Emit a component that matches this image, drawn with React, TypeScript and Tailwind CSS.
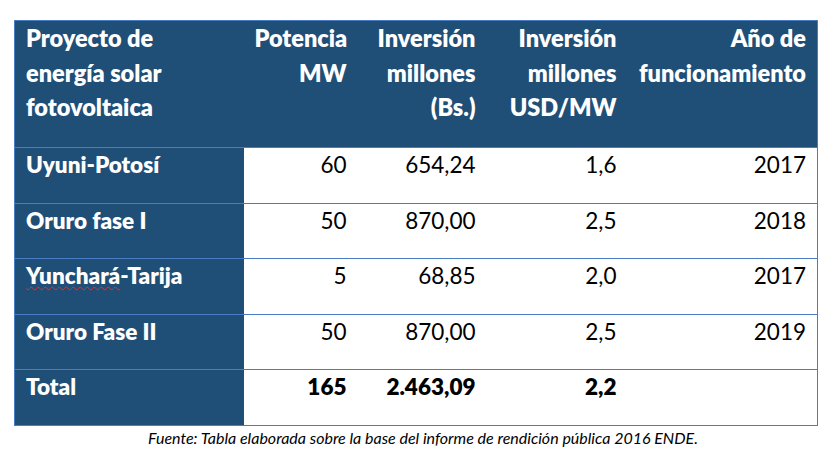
const rows = [
  { name: 'Uyuni-Potosí', mw: '60', inv: '654,24', usd: '1,6', year: '2017' },
  { name: 'Oruro fase I', mw: '50', inv: '870,00', usd: '2,5', year: '2018' },
  { name: 'Yunchará-Tarija', mw: '5', inv: '68,85', usd: '2,0', year: '2017', typo: true },
  { name: 'Oruro Fase II', mw: '50', inv: '870,00', usd: '2,5', year: '2019' },
]

export default function App() {
  return (
    <div className="w-[838px] h-[452px] bg-white font-['Lato',sans-serif] text-[22.5px] leading-[34.5px]">
      <div className="pt-[20px] pl-[14px]">
        <table className="border-collapse border border-[#4a7cc4] table-fixed w-[803px]">
          <colgroup>
            <col className="w-[229px]" />
            <col className="w-[114px]" />
            <col className="w-[129px]" />
            <col className="w-[141px]" />
            <col className="w-[190px]" />
          </colgroup>
          <thead>
            <tr className="h-[127px] bg-[#1f4e76] text-white text-[23.5px] align-top">
              <th className="text-left font-extrabold px-[11px]">Proyecto de<br />energía solar<br />fotovoltaica</th>
              <th className="text-right font-extrabold px-[11px]">Potencia<br />MW</th>
              <th className="text-right font-extrabold px-[11px]">Inversión<br />millones<br />(Bs.)</th>
              <th className="text-right font-extrabold px-[11px]">Inversión<br />millones<br />USD/MW</th>
              <th className="text-right font-extrabold px-[11px] whitespace-nowrap">Año de<br />funcionamiento</th>
            </tr>
          </thead>
          <tbody>
            {rows.map(r => (
              <tr key={r.name} className="h-[55.5px] align-top border-t border-[#4a7cc4] text-black">
                <td className="bg-[#1f4e76] text-white font-extrabold px-[11px]">
                  {r.typo ? (
                    <><span className="underline decoration-wavy decoration-[#e03030] decoration-1 underline-offset-[2px]">Yunchará</span>-Tarija</>
                  ) : r.name}
                </td>
                <td className="text-right px-[11px]">{r.mw}</td>
                <td className="text-right px-[11px]">{r.inv}</td>
                <td className="text-right px-[11px]">{r.usd}</td>
                <td className="text-right px-[11px]">{r.year}</td>
              </tr>
            ))}
            <tr className="h-[55.5px] align-top border-t border-[#4a7cc4] text-black font-extrabold">
              <td className="bg-[#1f4e76] text-white px-[11px]">Total</td>
              <td className="text-right px-[11px]">165</td>
              <td className="text-right px-[11px]">2.463,09</td>
              <td className="text-right px-[11px]">2,2</td>
              <td className="px-[11px]"></td>
            </tr>
          </tbody>
        </table>
      </div>
      <p className="pl-[8px] text-center italic text-[16px] leading-[18px] mt-[3px] text-black">
        Fuente: Tabla elaborada sobre la base del informe de rendición pública 2016 ENDE.
      </p>
    </div>
  )
}
